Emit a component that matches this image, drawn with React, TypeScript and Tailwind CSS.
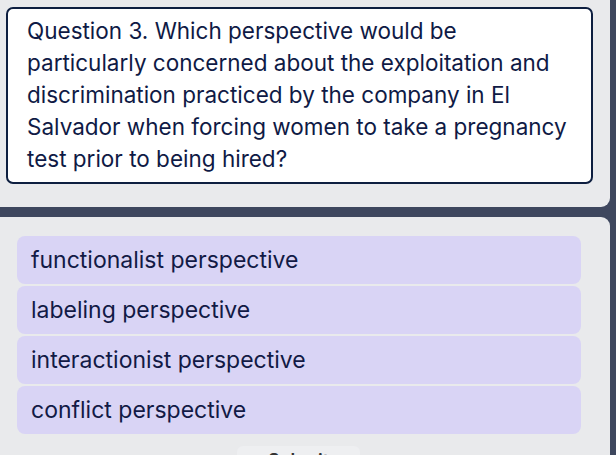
const options = [
  "functionalist perspective",
  "labeling perspective",
  "interactionist perspective",
  "conflict perspective",
];

export default function App() {
  return (
    <div className="w-[616px] h-[455px] overflow-hidden bg-[#3e475e] font-['Inter',sans-serif] text-[#111a44]">
      {/* question panel */}
      <div className="w-[610px] h-[207px] bg-[#e9eaec] rounded-br-[9px] pt-[7px] pl-[6px]">
        <div className="w-[587px] h-[177px] bg-white border-2 border-[#0e1f40] rounded-[7px] pl-[19px] pr-[12px] pt-[6px]">
          <p className="text-[22.5px] leading-[32px] text-[#0f1a45]">
            Question 3. Which perspective would be particularly concerned about the exploitation and
            discrimination practiced by the company in El Salvador when forcing women to take a pregnancy
            test prior to being hired?
          </p>
        </div>
      </div>

      {/* answers panel */}
      <div className="mt-[10px] w-[610px] h-[300px] bg-[#e9eaec] rounded-tr-[9px] pt-[19px] pl-[17px]">
        <div className="flex flex-col gap-[2px] w-[564px]">
          {options.map((o) => (
            <div
              key={o}
              className="h-[48px] flex items-center px-[14px] bg-[#d9d4f5] rounded-[8px] text-[23px] text-[#121a45]"
            >
              {o}
            </div>
          ))}
        </div>
        <div className="mt-[12px] ml-[220px] w-[123px] h-[40px] bg-[#eeeff1] rounded-[6px] flex items-start justify-center pt-[3px] text-[18px] leading-[24px] font-semibold text-[#333]">
          Submit
        </div>
      </div>
    </div>
  );
}
